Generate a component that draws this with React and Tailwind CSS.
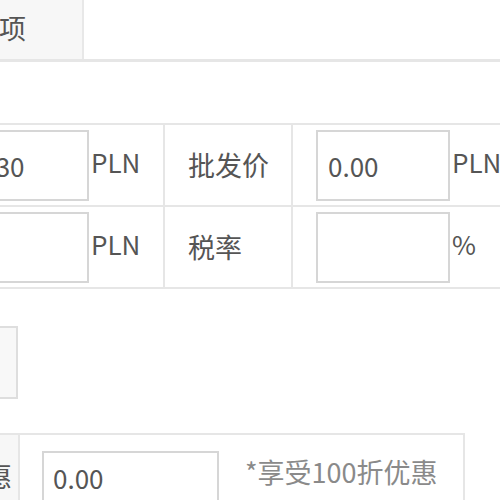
export default function App() {
  const font = { fontFamily: '"Noto Sans CJK SC", "Noto Sans", sans-serif' };
  return (
    <div className="w-[500px] h-[500px] overflow-hidden bg-white text-[#555]" style={font}>
      {/* tabs */}
      <div className="flex h-[62px] border-b-[3px] border-[#e6e6e6]">
        <div className="w-[84px] h-full bg-[#f7f7f7] border-r-2 border-[#e8e8e8] overflow-hidden flex items-center justify-end pr-[56px]">
          <span className="text-[27px] leading-none whitespace-nowrap mt-[-4px]">其他选项</span>
        </div>
        <div className="flex-1" />
      </div>

      {/* price table */}
      <div className="mt-[61px] ml-[-70px] w-[700px] border-t-2 border-[#e6e6e6]">
        <div className="flex h-[82px] border-b-2 border-[#e6e6e6]">
          <div className="w-[235px] shrink-0 border-r-2 border-[#e6e6e6] flex items-center pl-[25px]">
            <div className="w-[134px] h-[71px] border-2 border-[#d6d6d6] flex items-center pl-[17px] text-[26px]">0.30</div>
            <span className="text-[26px] ml-[2px] mt-[-8px]">PLN</span>
          </div>
          <div className="w-[128px] shrink-0 border-r-2 border-[#e6e6e6] flex items-center pl-[23px] text-[27px]">批发价</div>
          <div className="flex-1 flex items-center pl-[23px]">
            <div className="w-[134px] h-[71px] border-2 border-[#d6d6d6] flex items-center pl-[10px] text-[26px]">0.00</div>
            <span className="text-[26px] ml-[2px] mt-[-8px]">PLN</span>
          </div>
        </div>
        <div className="flex h-[82px] border-b-2 border-[#e6e6e6]">
          <div className="w-[235px] shrink-0 border-r-2 border-[#e6e6e6] flex items-center pl-[25px]">
            <div className="w-[134px] h-[71px] border-2 border-[#d6d6d6]" />
            <span className="text-[26px] ml-[2px] mt-[-8px]">PLN</span>
          </div>
          <div className="w-[128px] shrink-0 border-r-2 border-[#e6e6e6] flex items-center pl-[23px] text-[27px]">税率</div>
          <div className="flex-1 flex items-center pl-[23px]">
            <div className="w-[134px] h-[71px] border-2 border-[#d6d6d6]" />
            <span className="text-[26px] ml-[2px] mt-[-8px]">%</span>
          </div>
        </div>
      </div>

      {/* button */}
      <div className="mt-[37px] ml-[-60px] w-[78px] h-[73px] bg-[#f8f8f8] border-2 border-[#dedede]" />

      {/* discount table */}
      <div className="mt-[34px] ml-[-60px] w-[525px] h-[120px] border-t-2 border-r-2 border-[#e6e6e6] flex">
        <div className="w-[80px] shrink-0 bg-[#f7f7f7] border-r-2 border-[#e6e6e6] overflow-hidden flex items-start justify-end pr-[6px] pt-[27px]">
          <span className="text-[27px] leading-none whitespace-nowrap">会员优惠</span>
        </div>
        <div className="flex items-start pt-[16px] pl-[22px]">
          <div className="w-[177px] h-[72px] border-2 border-[#d6d6d6] flex items-start pt-[5px] pl-[9px] text-[26px]">0.00</div>
          <span className="text-[27px] ml-[26px] mt-[1px] text-[#8a8a8a] whitespace-nowrap">*享受100折优惠</span>
        </div>
      </div>
    </div>
  );
}
